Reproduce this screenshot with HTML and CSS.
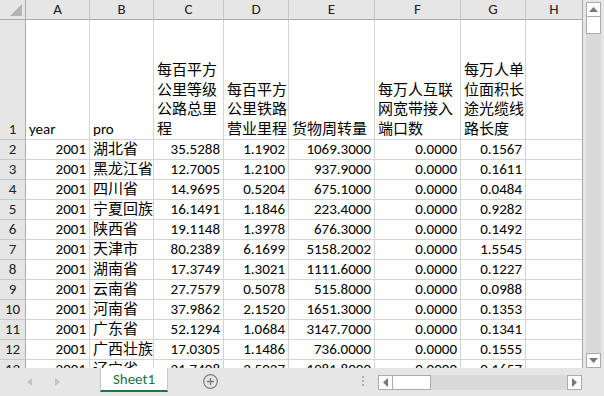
FILE: index.html
```html
<!DOCTYPE html>
<html lang="zh">
<head>
  <meta charset="UTF-8">
  <title>Sheet1</title>
  <link rel="stylesheet" href="styles.css">
</head>
<body>
  <div class="window">
    <div class="main">
      <div class="sheet">
        <div class="corner"><svg width="12" height="12" viewBox="0 0 12 12"><polygon points="12,0 12,12 0,12" fill="#b4b4b4"/></svg></div>
        <div class="ch">A</div><div class="ch">B</div><div class="ch">C</div><div class="ch">D</div>
        <div class="ch">E</div><div class="ch">F</div><div class="ch">G</div><div class="ch">H</div>

        <div class="rh tall">1</div>
        <div class="c tall"><span>year</span></div>
        <div class="c tall"><span>pro</span></div>
        <div class="c tall"><span>每百平方</span><span>公里等级</span><span>公路总里</span><span>程</span></div>
        <div class="c tall"><span>每百平方</span><span>公里铁路</span><span>营业里程</span></div>
        <div class="c tall"><span>货物周转量</span></div>
        <div class="c tall"><span>每万人互联</span><span>网宽带接入</span><span>端口数</span></div>
        <div class="c tall"><span>每万人单</span><span>位面积长</span><span>途光缆线</span><span>路长度</span></div>
        <div class="c tall"></div>

        <div class="rh">2</div><div class="c num">2001</div><div class="c">湖北省</div><div class="c num">35.5288</div><div class="c num">1.1902</div><div class="c num">1069.3000</div><div class="c num">0.0000</div><div class="c num">0.1567</div><div class="c"></div>
        <div class="rh">3</div><div class="c num">2001</div><div class="c">黑龙江省</div><div class="c num">12.7005</div><div class="c num">1.2100</div><div class="c num">937.9000</div><div class="c num">0.0000</div><div class="c num">0.1611</div><div class="c"></div>
        <div class="rh">4</div><div class="c num">2001</div><div class="c">四川省</div><div class="c num">14.9695</div><div class="c num">0.5204</div><div class="c num">675.1000</div><div class="c num">0.0000</div><div class="c num">0.0484</div><div class="c"></div>
        <div class="rh">5</div><div class="c num">2001</div><div class="c">宁夏回族</div><div class="c num">16.1491</div><div class="c num">1.1846</div><div class="c num">223.4000</div><div class="c num">0.0000</div><div class="c num">0.9282</div><div class="c"></div>
        <div class="rh">6</div><div class="c num">2001</div><div class="c">陕西省</div><div class="c num">19.1148</div><div class="c num">1.3978</div><div class="c num">676.3000</div><div class="c num">0.0000</div><div class="c num">0.1492</div><div class="c"></div>
        <div class="rh">7</div><div class="c num">2001</div><div class="c">天津市</div><div class="c num">80.2389</div><div class="c num">6.1699</div><div class="c num">5158.2002</div><div class="c num">0.0000</div><div class="c num">1.5545</div><div class="c"></div>
        <div class="rh">8</div><div class="c num">2001</div><div class="c">湖南省</div><div class="c num">17.3749</div><div class="c num">1.3021</div><div class="c num">1111.6000</div><div class="c num">0.0000</div><div class="c num">0.1227</div><div class="c"></div>
        <div class="rh">9</div><div class="c num">2001</div><div class="c">云南省</div><div class="c num">27.7579</div><div class="c num">0.5078</div><div class="c num">515.8000</div><div class="c num">0.0000</div><div class="c num">0.0988</div><div class="c"></div>
        <div class="rh">10</div><div class="c num">2001</div><div class="c">河南省</div><div class="c num">37.9862</div><div class="c num">2.1520</div><div class="c num">1651.3000</div><div class="c num">0.0000</div><div class="c num">0.1353</div><div class="c"></div>
        <div class="rh">11</div><div class="c num">2001</div><div class="c">广东省</div><div class="c num">52.1294</div><div class="c num">1.0684</div><div class="c num">3147.7000</div><div class="c num">0.0000</div><div class="c num">0.1341</div><div class="c"></div>
        <div class="rh">12</div><div class="c num">2001</div><div class="c">广西壮族</div><div class="c num">17.0305</div><div class="c num">1.1486</div><div class="c num">736.0000</div><div class="c num">0.0000</div><div class="c num">0.1555</div><div class="c"></div>
        <div class="rh">13</div><div class="c num">2001</div><div class="c">辽宁省</div><div class="c num">21.7408</div><div class="c num">2.5027</div><div class="c num">1981.8000</div><div class="c num">0.0000</div><div class="c num">0.1657</div><div class="c"></div>
      </div>

      <div class="vscroll">
        <div class="sbtn"><svg width="9" height="5" viewBox="0 0 9 5"><polygon points="0,5 9,5 4.5,0" fill="#777"/></svg></div>
        <div class="vthumb"></div>
        <div class="vtrack"></div>
        <div class="sbtn"><svg width="9" height="5" viewBox="0 0 9 5"><polygon points="0,0 9,0 4.5,5" fill="#777"/></svg></div>
      </div>
    </div>

    <div class="tabbar">
      <div class="nav">
        <svg width="5" height="8" viewBox="0 0 5 8"><polygon points="5,0 5,8 0,4" fill="#c4c4c4"/></svg>
        <svg width="5" height="8" viewBox="0 0 5 8"><polygon points="0,0 0,8 5,4" fill="#c4c4c4"/></svg>
      </div>
      <div class="tab">Sheet1</div>
      <div class="add">
        <svg width="15" height="15" viewBox="0 0 15 15"><circle cx="7.5" cy="7.5" r="6.8" fill="none" stroke="#7d7d7d" stroke-width="1.2"/><path d="M7.5 4v7M4 7.5h7" stroke="#7d7d7d" stroke-width="1.4"/></svg>
      </div>
      <div class="dots"><span></span><span></span><span></span></div>
      <div class="hscroll">
        <div class="sbtn"><svg width="5" height="9" viewBox="0 0 5 9"><polygon points="5,0 5,9 0,4.5" fill="#777"/></svg></div>
        <div class="hthumb"></div>
        <div class="htrack"></div>
        <div class="sbtn"><svg width="5" height="9" viewBox="0 0 5 9"><polygon points="0,0 0,9 5,4.5" fill="#777"/></svg></div>
      </div>
    </div>
  </div>
</body>
</html>
```

FILE: styles.css
```css
body {
  margin: 0;
  overflow: hidden;
  font-family: Carlito, Calibri, "Liberation Sans Narrow", Roboto, "Noto Sans CJK SC", sans-serif;
  font-size: 15px;
  color: #000;
}

.window {
  width: 604px;
  height: 396px;
  display: flex;
  flex-direction: column;
  background: #e6e6e6;
}

.main {
  display: flex;
  height: 368px;
}

.sheet {
  width: 583px;
  height: 368px;
  overflow: hidden;
  background: #fff;
  display: grid;
  grid-template-columns: 26px 64px 64px 70px 65px 86px 86px 65px 57px;
  grid-template-rows: 20px 120px;
  grid-auto-rows: 20px;
  border-right: 1px solid #ababab;
  box-sizing: border-box;
}

.sheet > div {
  box-sizing: border-box;
  white-space: nowrap;
}

.corner {
  background: #e6e6e6;
  border-right: 1px solid #ababab;
  border-bottom: 1px solid #ababab;
  display: flex;
  align-items: flex-end;
  justify-content: flex-end;
  padding: 0 3px 3px 0;
}

.ch {
  background: #e6e6e6;
  border-right: 1px solid #c8c8c8;
  border-bottom: 1px solid #ababab;
  text-align: center;
  line-height: 19px;
  color: #222;
}

.rh {
  background: #e6e6e6;
  border-right: 1px solid #ababab;
  border-bottom: 1px solid #c8c8c8;
  text-align: center;
  line-height: 19px;
  color: #222;
}

.c {
  border-right: 1px solid #d4d4d4;
  border-bottom: 1px solid #d4d4d4;
  padding: 0 3px;
  line-height: 19px;
}

.num {
  text-align: right;
}

.c.tall {
  display: flex;
  flex-direction: column;
  justify-content: flex-end;
  line-height: 19.5px;
}

.rh.tall {
  display: flex;
  align-items: flex-end;
  justify-content: center;
}

.vscroll {
  width: 21px;
  display: flex;
  flex-direction: column;
  padding: 2px 3px 0 3px;
  box-sizing: border-box;
}

.sbtn {
  width: 15px;
  height: 15px;
  box-sizing: border-box;
  background: #fff;
  border: 1px solid #ababab;
  display: flex;
  align-items: center;
  justify-content: center;
  flex: none;
}

.vthumb {
  height: 17px;
  background: #fff;
  border: 1px solid #ababab;
  border-top: none;
  box-sizing: border-box;
}

.vtrack {
  flex: 1;
  background: #dadada;
}

.tabbar {
  height: 28px;
  display: flex;
  align-items: flex-start;
}

.nav {
  width: 100px;
  display: flex;
  gap: 23px;
  padding: 10px 0 0 27px;
  box-sizing: border-box;
}

.tab {
  width: 68px;
  height: 24px;
  box-sizing: border-box;
  background: #fff;
  border-left: 1px solid #c6c6c6;
  border-right: 1px solid #c6c6c6;
  border-bottom: 2px solid #217346;
  color: #217346;
  text-align: center;
  line-height: 22px;
  font-size: 15px;
}

.add {
  margin: 6px 0 0 35px;
  height: 15px;
}

.dots {
  margin: 8px 0 0 144px;
  display: flex;
  flex-direction: column;
  gap: 2px;
}

.dots span {
  width: 2px;
  height: 2px;
  background: #b0b0b0;
}

.hscroll {
  margin: 7px 0 0 14px;
  width: 204px;
  height: 15px;
  display: flex;
}

.hthumb {
  width: 38px;
  background: #fff;
  border: 1px solid #ababab;
  border-left: none;
  box-sizing: border-box;
}

.htrack {
  flex: 1;
  background: #dadada;
}
```
